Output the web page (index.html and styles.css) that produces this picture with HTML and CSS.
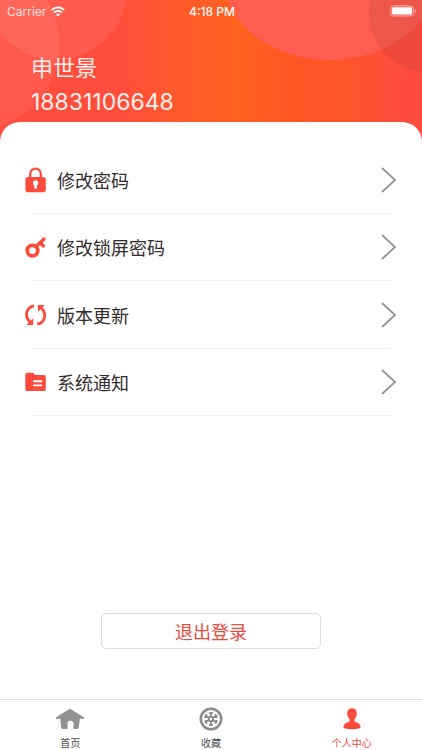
FILE: index.html
```html
<!DOCTYPE html>
<html lang="zh-CN">
<head>
<meta charset="utf-8">
<meta name="viewport" content="width=device-width, initial-scale=1">
<title>个人中心</title>
<link rel="stylesheet" href="styles.css">
</head>
<body>
<header class="hero">
  <svg class="hero-art" viewBox="0 0 422 148" preserveAspectRatio="none" aria-hidden="true">
    <circle cx="-27" cy="44" r="86" fill="#fff" fill-opacity=".07"/>
    <circle cx="56" cy="-11" r="71" fill="#fff" fill-opacity=".08"/>
    <ellipse cx="330" cy="-20" rx="105" ry="80" fill="#ff5d4f"/>
    <circle cx="430" cy="12" r="61" fill="#b84440" fill-opacity=".25"/>
  </svg>
  <div class="status">
    <span class="carrier">Carrier
      <svg width="14" height="11" viewBox="0 0 14 11" aria-hidden="true"><g fill="none" stroke="#fff" stroke-width="1.9"><path d="M.7 4.1a9 9 0 0 1 12.6 0"/><path d="M3 6.6a5.7 5.7 0 0 1 8 0"/></g><path d="M7 10.6 4.9 8.5a3 3 0 0 1 4.2 0z" fill="#fff"/></svg>
    </span>
    <time class="clock">4:18 PM</time>
    <span class="battery">
      <svg width="27" height="12" viewBox="0 0 27 12" aria-hidden="true"><rect x=".9" y=".9" width="22.4" height="10" rx="2.4" fill="none" stroke="#fff" stroke-opacity=".55"/><rect x="2.2" y="2.2" width="19.8" height="7.4" rx="1" fill="#fff"/><path d="M24.6 4v4q1.5-.6 1.5-2t-1.5-2" fill="#fff" fill-opacity=".5"/></svg>
    </span>
  </div>
  <div class="profile">
    <h1 class="name">申世景</h1>
    <p class="phone">18831106648</p>
  </div>
</header>
<main class="sheet">
  <nav class="menu">
    <a class="row" href="#password">
      <svg class="icon" viewBox="0 0 22 26" aria-hidden="true"><path d="M5.2 12V6.9a5.3 5.3 0 0 1 10.6 0V12" fill="none" stroke="#fc4b3d" stroke-width="2.2"/><rect x=".4" y="10" width="20.4" height="15.2" rx="2.8" fill="#fc4b3d"/><path d="M10.6 13.2a2.7 2.7 0 0 0-1.4 5v2.2a1.4 1.4 0 0 0 2.8 0v-2.2a2.7 2.7 0 0 0-1.4-5z" fill="#fff"/></svg>
      <span class="label">修改密码</span>
      <svg class="chevron" viewBox="0 0 16 26" aria-hidden="true"><path d="M1 1 14 13 1 25"/></svg>
    </a>
    <a class="row" href="#lock">
      <svg class="icon" viewBox="0 0 22 26" aria-hidden="true"><g fill="none" stroke="#fc4b3d"><circle cx="7.5" cy="16.6" r="5.3" stroke-width="3.8"/><path d="m11 12.4 8-7.4" stroke-width="3.4" stroke-linecap="round"/><path d="m15.4 9 3 3" stroke-width="3.2" stroke-linecap="round"/></g></svg>
      <span class="label">修改锁屏密码</span>
      <svg class="chevron" viewBox="0 0 16 26" aria-hidden="true"><path d="M1 1 14 13 1 25"/></svg>
    </a>
    <a class="row" href="#update">
      <svg class="icon" viewBox="0 0 22 26" aria-hidden="true"><g fill="none" stroke="#fc4b3d" stroke-width="2.7"><path d="M9 3.8C.8 5.4-.8 14.3 5 20.2"/><path d="M12.2 22.2c8.2-1.6 9.8-10.5 4-16.4"/></g><path d="M1.4 22.9h6.8v-6.7zM19.8 3.1h-6.8v6.7z" fill="#fc4b3d"/></svg>
      <span class="label">版本更新</span>
      <svg class="chevron" viewBox="0 0 16 26" aria-hidden="true"><path d="M1 1 14 13 1 25"/></svg>
    </a>
    <a class="row" href="#notices">
      <svg class="icon" viewBox="0 0 22 26" aria-hidden="true"><path d="M2 3.8h6l2.2 2.3h8.7q1.9 0 1.9 1.9v12.2q0 1.9-1.9 1.9H2.2q-1.9 0-1.9-1.9V5.5q0-1.7 1.7-1.7z" fill="#fc4b3d"/><path d="M8.2 12.2h9M8.2 16.4h9" stroke="#fff" stroke-width="1.9"/></svg>
      <span class="label">系统通知</span>
      <svg class="chevron" viewBox="0 0 16 26" aria-hidden="true"><path d="M1 1 14 13 1 25"/></svg>
    </a>
  </nav>
  <button class="logout" type="button">退出登录</button>
</main>
<nav class="tabs">
  <a class="tab" href="#home">
    <svg width="30" height="24" viewBox="0 0 30 24" aria-hidden="true"><path d="M15 1.8 28.5 10c1.2.9.4 2.4-.9 2.1l-2.7-.5-1.1 8.7q-.2 1.7-1.8 1.7h-3.5v-5.2a3 3 0 0 0-6 0V22H8q-1.6 0-1.8-1.7l-1.1-8.7-2.7.5c-1.3.3-2.1-1.2-.9-2.1z" fill="#929292"/></svg>
    <span>首页</span>
  </a>
  <a class="tab" href="#favorites">
    <svg width="24" height="24" viewBox="0 0 24 24" aria-hidden="true"><g fill="none" stroke="#8d8d8d"><circle cx="12" cy="12" r="10.2" stroke-width="2.6"/><g stroke-width="1.9"><path id="spoke" d="M12 9.5V5M10.2 5.4l1.8 1.6 1.8-1.6"/><use href="#spoke" transform="rotate(60 12 12)"/><use href="#spoke" transform="rotate(120 12 12)"/><use href="#spoke" transform="rotate(180 12 12)"/><use href="#spoke" transform="rotate(240 12 12)"/><use href="#spoke" transform="rotate(300 12 12)"/><circle cx="12" cy="12" r="2.2"/></g></g></svg>
    <span>收藏</span>
  </a>
  <a class="tab active" href="#profile" aria-current="page">
    <svg width="20" height="24" viewBox="0 0 20 24" aria-hidden="true"><path d="M10 1.2c3.2 0 4.9 2.2 4.8 5.3-.1 2.4-1 4.2-2.3 5.5v2.2c.3 1 5.1 1.7 5.9 4.5.5 1.9-.2 2.4-1.8 2.8-3.8.9-9.4.9-13.2 0-1.6-.4-2.3-.9-1.8-2.8.8-2.8 5.6-3.5 5.9-4.5V12c-1.3-1.3-2.2-3.1-2.3-5.5C5.1 3.4 6.8 1.2 10 1.2z" fill="#fc4b3d"/></svg>
    <span>个人中心</span>
  </a>
</nav>
</body>
</html>
```
FILE: styles.css
```css
* { box-sizing: border-box; }

body {
  margin: 0;
  min-height: 100vh;
  display: flex;
  flex-direction: column;
  background: #fff;
  color: #332c2b;
  font-family: "Noto Sans CJK SC", sans-serif;
}

a { color: inherit; text-decoration: none; }
svg { display: block; flex: none; }

.hero {
  position: relative;
  padding-bottom: 30px;
  overflow: hidden;
  background: linear-gradient(90deg, #ff4d40 0%, #ff4d3c 28%, #ff5c27 46%, #ff621f 56%, #ff5722 68%, #ff5428 80%, #ff4b3f 97%);
  color: #fff;
}

.hero-art { position: absolute; inset: 0; width: 100%; height: 100%; }

.status {
  position: relative;
  display: grid;
  grid-template-columns: 1fr auto 1fr;
  align-items: center;
  height: 22px;
  padding: 0 5px 0 7px;
  font-family: Inter, sans-serif;
  font-size: 12px;
}

.carrier { display: flex; align-items: center; gap: 5px; color: #ffe3df; }
.clock { font-weight: 500; }
.battery { justify-self: end; }

.profile {
  position: relative;
  display: grid;
  gap: 4px;
  padding: 28px 31px 0;
}

.name, .phone {
  margin: 0;
  font-size: 22px;
  font-weight: 400;
  line-height: 32px;
  color: #fff0ec;
}

.phone { font-family: Inter, sans-serif; font-size: 23px; }

.sheet {
  position: relative;
  flex: 1;
  display: flex;
  flex-direction: column;
  margin-top: -26px;
  padding: 24px 0 50px;
  border-radius: 20px 20px 0 0;
  background: #fff;
}

.menu { display: grid; grid-auto-rows: 1fr; height: 270px; }

.row {
  position: relative;
  display: flex;
  align-items: center;
  padding: 0 25px;
}

.row::after {
  content: "";
  position: absolute;
  inset: auto 31px 0;
  border-bottom: 1px solid #f0f0f0;
}

.icon { width: 22px; height: 26px; }
.label { flex: 1; margin-left: 10px; font-size: 18px; line-height: 26px; }
.chevron { width: 16px; height: 26px; fill: none; stroke: #949494; stroke-width: 1.8; }

.logout {
  width: 52%;
  height: 36px;
  margin: auto auto 0;
  padding: 0;
  border: 1px solid #dcdcdc;
  border-radius: 5px;
  background: #fff;
  color: #e64c40;
  font: inherit;
  font-size: 18px;
}

.tabs {
  display: grid;
  grid-template-columns: repeat(3, 1fr);
  height: 51px;
  padding-top: 7px;
  border-top: 1px solid #dedede;
}

.tab {
  display: flex;
  flex-direction: column;
  align-items: center;
  gap: 4px;
  color: #4c4c4c;
  font-size: 10px;
  line-height: 16px;
}

.active { color: #f04a3e; }
```
